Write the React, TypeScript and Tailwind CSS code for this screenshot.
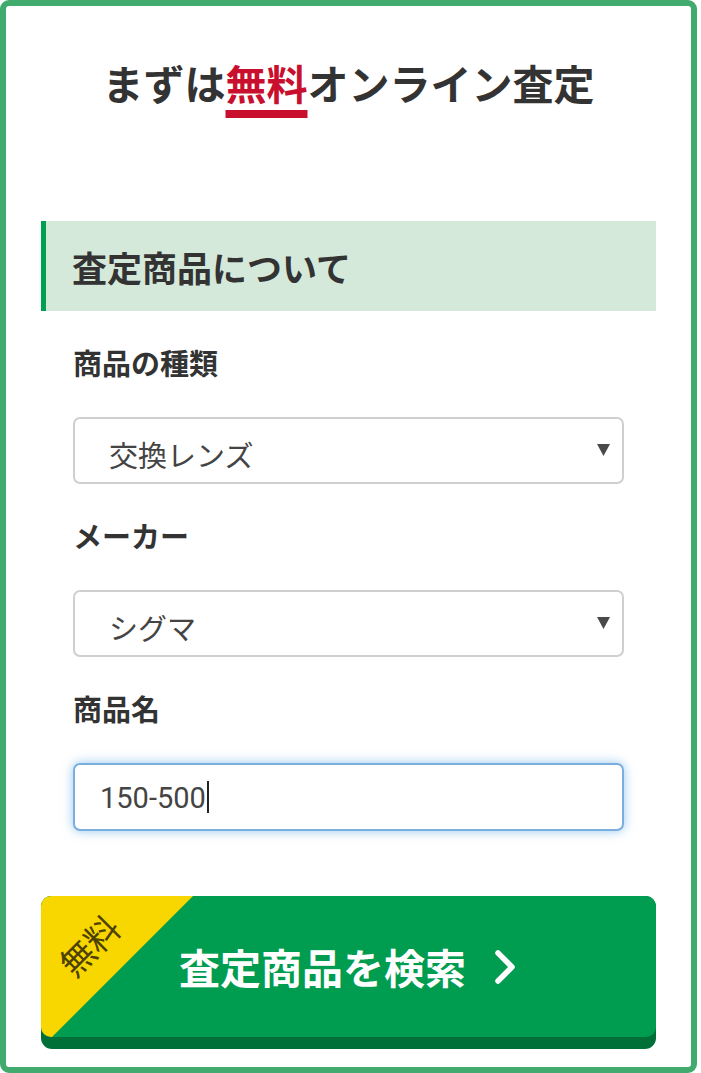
const jp = { fontFamily: '"Noto Sans CJK JP", "Noto Sans", sans-serif' };

function Label({ children }: { children: React.ReactNode }) {
  return (
    <div className="mt-[37px] text-[29px] font-bold leading-[29px] text-[#333]">
      {children}
    </div>
  );
}

function SelectBox({ value }: { value: string }) {
  return (
    <div className="mt-[40px] flex h-[67px] items-center justify-between rounded-[7px] border-2 border-[#cfcfcf] bg-white pl-[34px] pr-[12px]">
      <span className="pt-[7px] text-[29px] leading-none text-[#444]">{value}</span>
      <svg width="13" height="12" viewBox="0 0 13 12" className="mb-[2px]">
        <path d="M0 0 H13 L6.5 12 Z" fill="#4a4a4a" />
      </svg>
    </div>
  );
}

export default function App() {
  return (
    <div className="bg-white" style={jp}>
      <div className="h-[1073px] w-[697px] overflow-hidden rounded-[9px] border-[6px] border-[#41aa6d] bg-white px-[35px]">
        <h1 className="pt-[56px] text-center text-[41px] font-bold leading-[41px] text-[#333]">
          まずは
          <span className="text-[#c8102e] underline decoration-[#c8102e] decoration-[8px] underline-offset-[10px]">
            無料
          </span>
          オンライン査定
        </h1>

        <div className="mt-[118px] flex h-[90px] items-center border-l-[5px] border-[#00a052] bg-[#d4e9da] pl-[26px]">
          <span className="text-[35px] font-bold leading-none text-[#333]">査定商品について</span>
        </div>

        <div className="px-[32px]">
          <Label>商品の種類</Label>
          <SelectBox value="交換レンズ" />
          <Label>メーカー</Label>
          <SelectBox value="シグマ" />
          <Label>商品名</Label>
          <div className="mt-[40px] flex h-[68px] items-center rounded-[7px] border-2 border-[#7aaedc] bg-white pl-[25px] shadow-[0_0_11px_rgba(102,175,233,0.7)]">
            <span
              className="pt-[2px] text-[29px] leading-none text-[#444]"
              style={{ fontFamily: 'Roboto, "Noto Sans CJK JP", sans-serif' }}
            >
              150-500
            </span>
            <span className="ml-[1px] h-[32px] w-[2px] bg-[#222]" />
          </div>
        </div>

        <div className="mt-[65px] rounded-[11px] bg-[#006f38] pb-[12px]">
          <div className="relative flex h-[141px] items-center justify-center overflow-hidden rounded-[10px] bg-[#009c4f]">
            <div className="absolute left-0 top-0 h-[152px] w-[152px] bg-[#f8d600] [clip-path:polygon(0_0,100%_0,0_100%)]" />
            <span className="absolute left-[14px] top-[32px] -rotate-45 text-[34px] leading-none text-[#4d4100]">
              無料
            </span>
            <span className="relative text-[41px] font-bold leading-none text-white">査定商品を検索</span>
            <svg width="24" height="36" viewBox="0 0 24 36" className="relative ml-[28px]">
              <path d="M4 4 L18 18 L4 32" fill="none" stroke="white" strokeWidth="5.5" strokeLinecap="round" strokeLinejoin="round" />
            </svg>
          </div>
        </div>
      </div>
    </div>
  );
}
